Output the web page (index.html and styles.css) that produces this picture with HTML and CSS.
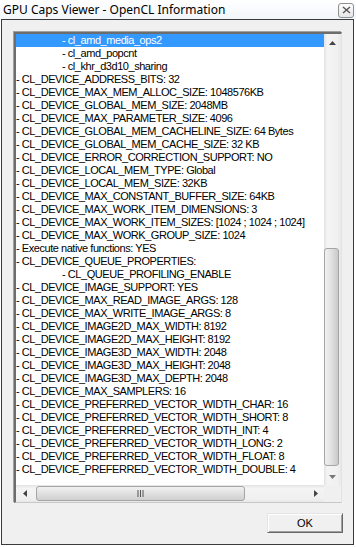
FILE: index.html
```html
<html>
    <head>
        <title>GPU Caps Viewer - OpenCL Information</title>
        <link rel="stylesheet" href="styles.css">
    </head>
    <body>
        <div class="titlebar">
            <span class="title">GPU Caps Viewer - OpenCL Information</span>
            <span class="close">
                <svg width="9" height="8" viewBox="0 0 9 8"><path d="M1 1 L8 7 M8 1 L1 7" stroke="#555" stroke-width="1.4" fill="none"/></svg>
            </span>
        </div>
        <div class="frame">
            <div class="listbox">
                <div class="listbody">
                    <div class="rows">
                        <div class="row sub selected">- cl_amd_media_ops2</div>
                        <div class="row sub">- cl_amd_popcnt</div>
                        <div class="row sub">- cl_khr_d3d10_sharing</div>
                        <div class="row">- CL_DEVICE_ADDRESS_BITS: 32</div>
                        <div class="row">- CL_DEVICE_MAX_MEM_ALLOC_SIZE: 1048576KB</div>
                        <div class="row">- CL_DEVICE_GLOBAL_MEM_SIZE: 2048MB</div>
                        <div class="row">- CL_DEVICE_MAX_PARAMETER_SIZE: 4096</div>
                        <div class="row">- CL_DEVICE_GLOBAL_MEM_CACHELINE_SIZE: 64 Bytes</div>
                        <div class="row">- CL_DEVICE_GLOBAL_MEM_CACHE_SIZE: 32 KB</div>
                        <div class="row">- CL_DEVICE_ERROR_CORRECTION_SUPPORT: NO</div>
                        <div class="row">- CL_DEVICE_LOCAL_MEM_TYPE: Global</div>
                        <div class="row">- CL_DEVICE_LOCAL_MEM_SIZE: 32KB</div>
                        <div class="row">- CL_DEVICE_MAX_CONSTANT_BUFFER_SIZE: 64KB</div>
                        <div class="row">- CL_DEVICE_MAX_WORK_ITEM_DIMENSIONS: 3</div>
                        <div class="row">- CL_DEVICE_MAX_WORK_ITEM_SIZES: [1024 ; 1024 ; 1024]</div>
                        <div class="row">- CL_DEVICE_MAX_WORK_GROUP_SIZE: 1024</div>
                        <div class="row">- Execute native functions: YES</div>
                        <div class="row">- CL_DEVICE_QUEUE_PROPERTIES:</div>
                        <div class="row sub">- CL_QUEUE_PROFILING_ENABLE</div>
                        <div class="row">- CL_DEVICE_IMAGE_SUPPORT: YES</div>
                        <div class="row">- CL_DEVICE_MAX_READ_IMAGE_ARGS: 128</div>
                        <div class="row">- CL_DEVICE_MAX_WRITE_IMAGE_ARGS: 8</div>
                        <div class="row">- CL_DEVICE_IMAGE2D_MAX_WIDTH: 8192</div>
                        <div class="row">- CL_DEVICE_IMAGE2D_MAX_HEIGHT: 8192</div>
                        <div class="row">- CL_DEVICE_IMAGE3D_MAX_WIDTH: 2048</div>
                        <div class="row">- CL_DEVICE_IMAGE3D_MAX_HEIGHT: 2048</div>
                        <div class="row">- CL_DEVICE_IMAGE3D_MAX_DEPTH: 2048</div>
                        <div class="row">- CL_DEVICE_MAX_SAMPLERS: 16</div>
                        <div class="row">- CL_DEVICE_PREFERRED_VECTOR_WIDTH_CHAR: 16</div>
                        <div class="row">- CL_DEVICE_PREFERRED_VECTOR_WIDTH_SHORT: 8</div>
                        <div class="row">- CL_DEVICE_PREFERRED_VECTOR_WIDTH_INT: 4</div>
                        <div class="row">- CL_DEVICE_PREFERRED_VECTOR_WIDTH_LONG: 2</div>
                        <div class="row">- CL_DEVICE_PREFERRED_VECTOR_WIDTH_FLOAT: 8</div>
                        <div class="row">- CL_DEVICE_PREFERRED_VECTOR_WIDTH_DOUBLE: 4</div>
                    </div>
                    <div class="vscroll">
                        <div class="arrow">
                            <svg width="7" height="4" viewBox="0 0 7 4"><path d="M3.5 0 L7 4 L0 4 Z" fill="#444"/></svg>
                        </div>
                        <div class="vtrack">
                            <div class="vthumb"></div>
                        </div>
                        <div class="arrow">
                            <svg width="7" height="4" viewBox="0 0 7 4"><path d="M0 0 L7 0 L3.5 4 Z" fill="#777"/></svg>
                        </div>
                    </div>
                </div>
                <div class="hscroll-row">
                    <div class="hscroll">
                        <div class="harrow">
                            <svg width="4" height="7" viewBox="0 0 4 7"><path d="M4 0 L4 7 L0 3.5 Z" fill="#444"/></svg>
                        </div>
                        <div class="htrack">
                            <div class="hthumb">
                                <svg width="7" height="7" viewBox="0 0 7 7"><path d="M1 0 V7 M3.5 0 V7 M6 0 V7" stroke="#555" stroke-width="1" fill="none"/></svg>
                            </div>
                        </div>
                        <div class="harrow">
                            <svg width="4" height="7" viewBox="0 0 4 7"><path d="M0 0 L4 3.5 L0 7 Z" fill="#444"/></svg>
                        </div>
                    </div>
                    <div class="corner"></div>
                </div>
            </div>
            <div class="buttons">
                <button class="ok">OK</button>
            </div>
        </div>
    </body>
</html>
```

FILE: styles.css
```css
body {
    margin: 0;
    background: #ffffff;
    font-family: "Liberation Sans", Arial, sans-serif;
}
.titlebar {
    height: 19px;
    display: flex;
    align-items: center;
    justify-content: space-between;
    padding: 0 2px 0 3px;
    background: linear-gradient(#ffffff, #f2f6fa);
}
.title {
    font-family: "Noto Sans", sans-serif;
    font-size: 12px;
    color: #000000;
}
.close {
    width: 14px;
    height: 13px;
    margin-top: 1px;
    border: 1px solid #8e8f8f;
    border-radius: 3px;
    background: linear-gradient(#fdfdfd, #e6e6e6);
    display: flex;
    align-items: center;
    justify-content: center;
}
.frame {
    margin-left: 1px;
    width: 353px;
    height: 526px;
    box-sizing: border-box;
    border: 1px solid #3a3a3a;
    background: #f0f0f0;
    padding: 12px 0 0 12px;
}
.listbox {
    width: 328px;
    height: 471px;
    box-sizing: border-box;
    border-top: 2px solid #6d6d6d;
    border-left: 2px solid #6d6d6d;
    border-right: 1px solid #e3e3e3;
    border-bottom: 1px solid #c8c8c8;
    box-shadow: -1px -1px 0 #a0a0a0;
    background: #ffffff;
    display: flex;
    flex-direction: column;
}
.listbody {
    display: flex;
    height: 452px;
}
.rows {
    width: 309px;
    overflow: hidden;
    font-size: 11px;
    letter-spacing: -0.45px;
    color: #000000;
}
.row {
    height: 13px;
    line-height: 13px;
    white-space: nowrap;
}
.row.sub {
    padding-left: 46px;
}
.row.selected {
    background: #3399ff;
    color: #ffffff;
}
.vscroll {
    width: 17px;
    display: flex;
    flex-direction: column;
    background: linear-gradient(90deg, #e3e3e3, #f4f4f4 20%, #f0f0f0 80%, #e8e8e8);
}
.arrow {
    height: 17px;
    display: flex;
    align-items: center;
    justify-content: center;
}
.vtrack {
    flex: 1;
    padding-top: 197px;
}
.vthumb {
    width: 15px;
    height: 218px;
    box-sizing: border-box;
    border: 1px solid #a5a5a5;
    border-radius: 3px;
    background: linear-gradient(90deg, #f1f1f1, #e0e0e0 50%, #c9c9c9);
}
.hscroll-row {
    display: flex;
    height: 17px;
}
.hscroll {
    width: 309px;
    display: flex;
    background: linear-gradient(#e3e3e3, #f4f4f4 20%, #f0f0f0 80%, #e8e8e8);
}
.harrow {
    width: 17px;
    display: flex;
    align-items: center;
    justify-content: center;
}
.htrack {
    flex: 1;
    padding: 1px 0 0 3px;
}
.hthumb {
    width: 209px;
    height: 15px;
    box-sizing: border-box;
    border: 1px solid #a5a5a5;
    border-radius: 3px;
    background: linear-gradient(#f1f1f1, #e0e0e0 50%, #cfcfcf);
    display: flex;
    align-items: center;
    justify-content: center;
}
.corner {
    width: 17px;
    background: #f0f0f0;
}
.buttons {
    width: 329px;
    display: flex;
    justify-content: flex-end;
    padding-top: 10px;
}
.ok {
    width: 76px;
    height: 20px;
    padding: 0;
    font-family: "Liberation Sans", Arial, sans-serif;
    font-size: 11px;
    color: #000000;
    background: #f0f0f0;
    border: 1px solid;
    border-color: #e3e3e3 #696969 #696969 #e3e3e3;
    box-shadow: inset 1px 1px 0 #ffffff, inset -1px -1px 0 #a0a0a0;
}
```
